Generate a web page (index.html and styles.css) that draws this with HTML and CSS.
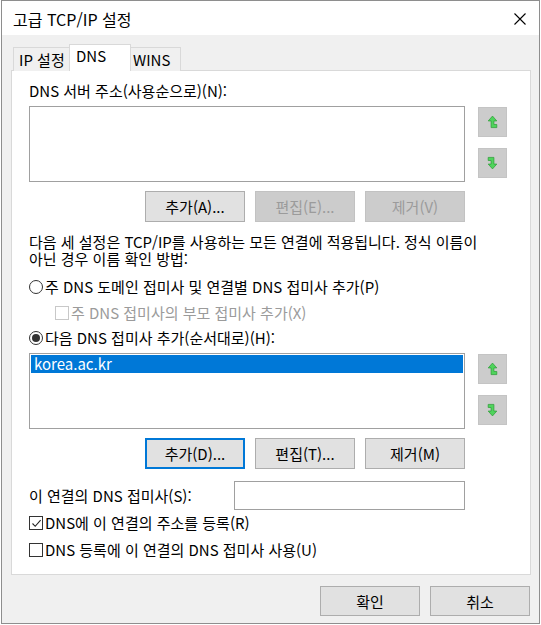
FILE: index.html
```html
<!DOCTYPE html>
<html lang="ko">
<head>
<meta charset="utf-8">
<title>고급 TCP/IP 설정</title>
<link rel="stylesheet" href="styles.css">
</head>
<body>
<div class="window">
  <div class="titlebar">
    <span class="title">고급 TCP/IP 설정</span>
    <svg class="close" width="12" height="12" viewBox="0 0 12 12"><path d="M0.5 0.5 L11.5 11.5 M11.5 0.5 L0.5 11.5" stroke="#000" stroke-width="1.1" fill="none"/></svg>
  </div>
  <div class="body">
    <div class="tabs">
      <div class="tab">IP 설정</div>
      <div class="tab active">DNS</div>
      <div class="tab">WINS</div>
    </div>
    <div class="panel">
      <div class="label first">DNS 서버 주소(사용순으로)(N):</div>
      <div class="listrow">
        <div class="listbox"></div>
        <div class="arrows">
          <div class="arrowbtn"><svg width="11" height="14" viewBox="0 0 10 13"><path d="M1 5.5 L5 1 L9 5.5 L6.3 5.5 L6.3 8.8 L9 8.8 L9 11.7 L3.7 11.7 L3.7 5.5 Z" fill="#4fd45c" stroke="#2f9e3a" stroke-width="0.7" stroke-linejoin="round"/></svg></div>
          <div class="arrowbtn"><svg width="11" height="14" viewBox="0 0 10 13"><path d="M1 1.3 L6.3 1.3 L6.3 7.5 L9 7.5 L5 12 L1 7.5 L3.7 7.5 L3.7 4.2 L1 4.2 Z" fill="#4fd45c" stroke="#2f9e3a" stroke-width="0.7" stroke-linejoin="round"/></svg></div>
        </div>
      </div>
      <div class="btnrow">
        <div class="btn">추가(A)...</div>
        <div class="btn disabled">편집(E)...</div>
        <div class="btn disabled">제거(V)</div>
      </div>
      <p class="desc">다음 세 설정은 TCP/IP를 사용하는 모든 연결에 적용됩니다. 정식 이름이<br>아닌 경우 이름 확인 방법:</p>
      <div class="option radio-row r1"><span class="radio"></span>주 DNS 도메인 접미사 및 연결별 DNS 접미사 추가(P)</div>
      <div class="option sub disabled-text"><span class="check dis"></span>주 DNS 접미사의 부모 접미사 추가(X)</div>
      <div class="option radio-row"><span class="radio on"></span>다음 DNS 접미사 추가(순서대로)(H):</div>
      <div class="listrow second">
        <div class="listbox"><div class="item sel">korea.ac.kr</div></div>
        <div class="arrows">
          <div class="arrowbtn"><svg width="11" height="14" viewBox="0 0 10 13"><path d="M1 5.5 L5 1 L9 5.5 L6.3 5.5 L6.3 8.8 L9 8.8 L9 11.7 L3.7 11.7 L3.7 5.5 Z" fill="#4fd45c" stroke="#2f9e3a" stroke-width="0.7" stroke-linejoin="round"/></svg></div>
          <div class="arrowbtn"><svg width="11" height="14" viewBox="0 0 10 13"><path d="M1 1.3 L6.3 1.3 L6.3 7.5 L9 7.5 L5 12 L1 7.5 L3.7 7.5 L3.7 4.2 L1 4.2 Z" fill="#4fd45c" stroke="#2f9e3a" stroke-width="0.7" stroke-linejoin="round"/></svg></div>
        </div>
      </div>
      <div class="btnrow">
        <div class="btn focus">추가(D)...</div>
        <div class="btn">편집(T)...</div>
        <div class="btn">제거(M)</div>
      </div>
      <div class="suffixrow">
        <span>이 연결의 DNS 접미사(S):</span>
        <div class="input"></div>
      </div>
      <div class="option chk1"><span class="check on"><svg width="11" height="11" viewBox="0 0 11 11"><path d="M1.5 5.5 L4.2 8.3 L9.6 2.2" stroke="#222" stroke-width="1.1" fill="none"/></svg></span>DNS에 이 연결의 주소를 등록(R)</div>
      <div class="option chk2"><span class="check"></span>DNS 등록에 이 연결의 DNS 접미사 사용(U)</div>
    </div>
    <div class="footer">
      <div class="btn">확인</div>
      <div class="btn">취소</div>
    </div>
  </div>
</div>
</body>
</html>
```
FILE: styles.css
```css
html, body {
  margin: 0;
  padding: 0;
  background: #ffffff;
}
body {
  font-family: "Noto Sans CJK KR", "Noto Sans", sans-serif;
  font-size: 15px;
  color: #000;
}
.window {
  box-sizing: border-box;
  margin-left: 1px;
  width: 539px;
  height: 624px;
  border: 1px solid #8e8e8e;
  display: flex;
  flex-direction: column;
  background: #f0f0f0;
}
.titlebar {
  height: 34px;
  background: #fff;
  display: flex;
  align-items: center;
  justify-content: space-between;
  padding: 0 13px 0 11px;
  flex: none;
}
.title {
  font-size: 16px;
  margin-top: 2px;
}
.close {
  margin-top: 2px;
}
.body {
  flex: 1;
  padding: 10px 9px 0 9px;
  display: flex;
  flex-direction: column;
}
.tabs {
  display: flex;
  align-items: flex-end;
  padding-left: 2px;
  height: 26px;
  position: relative;
  z-index: 1;
  margin-bottom: -1px;
}
.tab {
  box-sizing: border-box;
  height: 24px;
  border: 1px solid #d9d9d9;
  border-bottom: none;
  background: #f0f0f0;
  padding: 0 5px;
  line-height: 22px;
  display: flex;
  align-items: center;
}
.tab + .tab {
  border-left: none;
}
.tab.active {
  height: 27px;
  background: #fff;
  border-left: 1px solid #d9d9d9;
  margin: 0 -2px;
  padding: 0 6px 4px 6px;
  position: relative;
  z-index: 2;
  width: 62px;
}
.tab.active + .tab {
  border-left: none;
  padding-left: 4px;
  width: 52px;
}
.tab:first-child {
  width: 58px;
}
.panel {
  box-sizing: border-box;
  width: 520px;
  height: 505px;
  background: #fff;
  border: 1px solid #d9d9d9;
  padding: 0 0 0 17px;
  display: flex;
  flex-direction: column;
}
.label.first {
  margin-top: 11px;
  line-height: 18px;
}
.listrow {
  display: flex;
  margin-top: 6px;
  gap: 13px;
}
.listrow.second {
  margin-top: 2px;
}
.listbox {
  box-sizing: border-box;
  width: 436px;
  height: 76px;
  border: 1px solid #a0a0a0;
  background: #fff;
  padding: 1px;
}
.item {
  height: 18px;
  line-height: 18px;
  padding-left: 3px;
}
.item.sel {
  background: #0078d7;
  color: #fff;
}
.arrows {
  display: flex;
  flex-direction: column;
  gap: 11px;
  padding-top: 1px;
}
.arrowbtn {
  box-sizing: border-box;
  width: 29px;
  height: 30px;
  background: #cccccc;
  border: 1px solid #c4c4c4;
  display: flex;
  align-items: center;
  justify-content: center;
}
.btnrow {
  display: flex;
  gap: 10px;
  margin-top: 9px;
  padding-left: 116px;
}
.btn {
  box-sizing: border-box;
  width: 100px;
  height: 31px;
  background: #e1e1e1;
  border: 1px solid #adadad;
  display: flex;
  align-items: center;
  justify-content: center;
}
.btn.disabled {
  background: #cccccc;
  border-color: #c2c2c2;
  color: #9b9b9b;
}
.btn.focus {
  border: 2px solid #0078d7;
}
.desc {
  margin: 11px 0 0 0;
  line-height: 17px;
}
.option {
  display: flex;
  align-items: center;
  height: 26px;
  line-height: 18px;
}
.r1 {
  margin-top: 7px;
}
.sub {
  padding-left: 26px;
  height: 25px;
}
.disabled-text {
  color: #9b9b9b;
}
.radio {
  box-sizing: border-box;
  width: 14px;
  height: 14px;
  border: 1px solid #333;
  border-radius: 50%;
  margin-right: 2px;
  display: flex;
  align-items: center;
  justify-content: center;
}
.radio.on::after {
  content: "";
  width: 8px;
  height: 8px;
  border-radius: 50%;
  background: #333;
}
.check {
  box-sizing: border-box;
  width: 14px;
  height: 14px;
  border: 1px solid #333;
  margin-right: 2px;
  display: flex;
  align-items: center;
  justify-content: center;
  background: #fff;
}
.check.dis {
  border-color: #c8c8c8;
}
.suffixrow {
  display: flex;
  align-items: center;
  margin-top: 12px;
  height: 29px;
}
.suffixrow span {
  width: 205px;
}
.input {
  box-sizing: border-box;
  width: 231px;
  height: 29px;
  border: 1px solid #a0a0a0;
  background: #fff;
}
.chk1 {
  margin-top: 0;
}
.chk2 {
  margin-top: 1px;
}
.footer {
  display: flex;
  justify-content: flex-end;
  gap: 10px;
  padding-top: 11px;
}
.footer .btn {
  height: 30px;
}
```
